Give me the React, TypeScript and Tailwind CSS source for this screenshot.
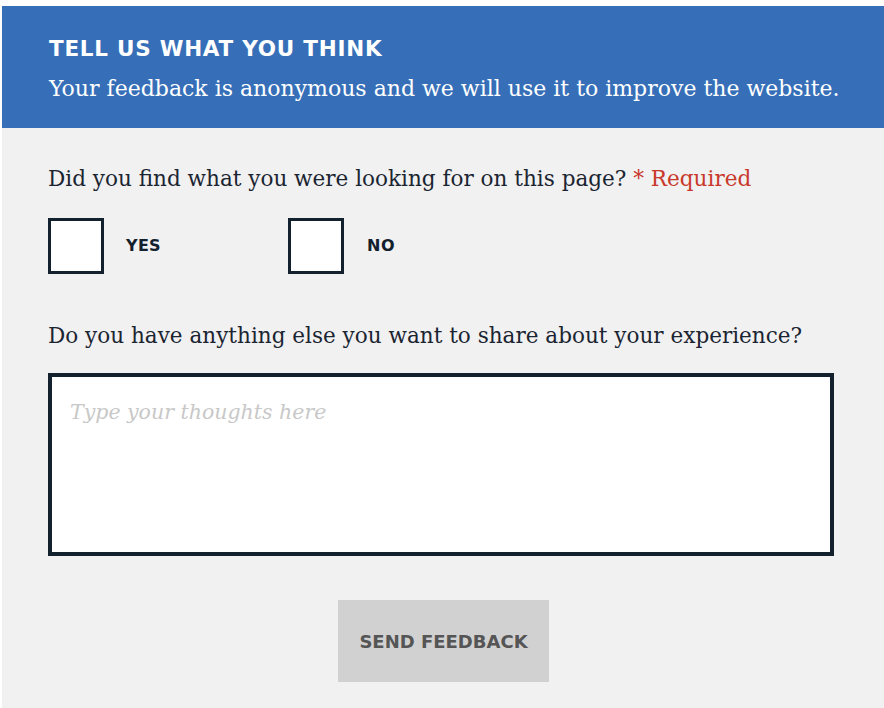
export default function App() {
  const serif = { fontFamily: '"DejaVu Serif", "Liberation Serif", serif' };
  const sans = { fontFamily: '"DejaVu Sans", Inter, sans-serif' };
  return (
    <div className="min-h-screen bg-white pt-[6px] pl-[2px] overflow-hidden">
      <div className="w-[900px] bg-[#f1f1f1] min-h-[702px]">
        <div className="bg-[#366fb8] h-[122px] pl-[47px] pt-[30px]">
          <h1 className="text-white font-bold text-[21.5px] leading-[26px] tracking-[0.75px]" style={sans}>
            TELL US WHAT YOU THINK
          </h1>
          <p className="text-white text-[22px] leading-[30px] mt-[12px]" style={serif}>
            Your feedback is anonymous and we will use it to improve the website.
          </p>
        </div>
        <div className="pl-[46px] pt-[37px]">
          <p className="text-[#1b2531] text-[21.55px] leading-[28px]" style={serif}>
            Did you find what you were looking for on this page? <span className="text-[#c8392b]">* Required</span>
          </p>
          <div className="flex items-center mt-[25px] h-[56px]">
            <div className="w-[56px] h-[56px] border-[3px] border-[#13202e] bg-white" />
            <span className="ml-[22px] w-[162px] font-bold text-[16px] tracking-[0.3px] text-[#13202e]" style={sans}>YES</span>
            <div className="w-[56px] h-[56px] border-[3px] border-[#13202e] bg-white" />
            <span className="ml-[23px] font-bold text-[16px] tracking-[0.5px] text-[#13202e]" style={sans}>NO</span>
          </div>
          <p className="text-[#1b2531] text-[21.55px] leading-[28px] mt-[48px]" style={serif}>
            Do you have anything else you want to share about your experience?
          </p>
          <div className="mt-[23px] w-[786px] h-[183px] border-[4px] border-[#13202e] bg-white pl-[18px] pt-[20px]">
            <span className="italic text-[#c8c8c8] text-[20.5px]" style={serif}>Type your thoughts here</span>
          </div>
          <div className="ml-[290px] mt-[44px]">
            <button className="w-[211px] h-[82px] bg-[#d1d1d1] text-[#555555] font-bold text-[18px]" style={sans}>
              SEND FEEDBACK
            </button>
          </div>
        </div>
      </div>
    </div>
  );
}
